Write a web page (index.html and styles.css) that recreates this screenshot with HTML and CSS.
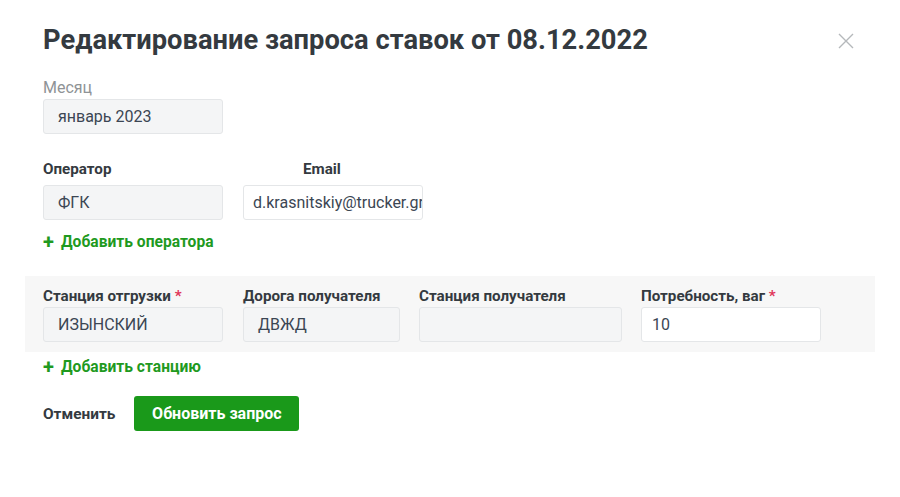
FILE: index.html
```html
<!DOCTYPE html>
<html lang="ru">
<head>
<meta charset="utf-8">
<link rel="stylesheet" href="styles.css">
</head>
<body>
<div class="modal">
  <div class="header">
    <h1 class="title">Редактирование запроса ставок от 08.12.2022</h1>
    <button class="close" aria-label="Закрыть">
      <svg width="16" height="16" viewBox="0 0 16 16"><path d="M1 1L15 15M15 1L1 15" stroke="#b5b8bb" stroke-width="1.4" fill="none"/></svg>
    </button>
  </div>

  <div class="section">
    <div class="label label-muted">Месяц</div>
    <div class="field field-gray">январь 2023</div>
  </div>

  <div class="section row-op">
    <div class="col">
      <div class="label label-bold">Оператор</div>
      <div class="field field-gray">ФГК</div>
    </div>
    <div class="col">
      <div class="label label-bold label-email">Email</div>
      <div class="field field-white field-email">d.krasnitskiy@trucker.group</div>
    </div>
  </div>

  <div class="section add add-op"><span class="plus">+</span>Добавить оператора</div>

  <div class="band">
    <div class="col w180">
      <div class="label label-bold">Станция отгрузки <span class="req">*</span></div>
      <div class="field field-gray">ИЗЫНСКИЙ</div>
    </div>
    <div class="col w157">
      <div class="label label-bold">Дорога получателя</div>
      <div class="field field-gray">ДВЖД</div>
    </div>
    <div class="col w203">
      <div class="label label-bold">Станция получателя</div>
      <div class="field field-gray"></div>
    </div>
    <div class="col w180">
      <div class="label label-bold">Потребность, ваг <span class="req">*</span></div>
      <div class="field field-white field-num">10</div>
    </div>
  </div>

  <div class="section add add-st"><span class="plus">+</span>Добавить станцию</div>

  <div class="section actions">
    <span class="cancel">Отменить</span>
    <button class="submit">Обновить запрос</button>
  </div>
</div>
</body>
</html>
```

FILE: styles.css
```css
* { box-sizing: border-box; }
html, body { margin: 0; padding: 0; background: #fff; }
body {
  font-family: Roboto, "Noto Sans", "Liberation Sans", sans-serif;
  color: #343a40;
  width: 900px;
  height: 497px;
  overflow: hidden;
}
.modal { padding: 25px 25px 0 25px; }
.header {
  display: flex;
  justify-content: space-between;
  align-items: center;
  padding-left: 18px;
  padding-right: 21px;
}
.title {
  margin: 0;
  font-size: 27.3px;
  line-height: 30px;
  font-weight: 700;
  color: #343a40;
}
.close {
  border: 0;
  background: none;
  padding: 0;
  width: 16px;
  height: 16px;
  margin-top: 2px;
}
.close svg { display: block; }
.section { padding-left: 18px; }
.label {
  font-size: 15.2px;
  line-height: 18px;
  white-space: nowrap;
}
.label-muted { font-size: 16px; color: #8f9396; margin-top: 24px; }
.label-bold { font-weight: 700; color: #343a40; }
.req { color: #e0365a; }
.field {
  height: 35px;
  border-radius: 3px;
  border: 1px solid #e4e6e8;
  font-size: 16px;
  line-height: 33px;
  color: #3b4653;
  white-space: nowrap;
  overflow: hidden;
}
.field-gray { background: #f4f5f6; padding-left: 14px; }
.field-white { background: #fff; padding-left: 9px; }
.section > .field { width: 180px; margin-top: 2px; }
.row-op { display: flex; gap: 20px; margin-top: 26px; }
.row-op .col { width: 180px; }
.row-op .field { margin-top: 7px; }
.label-email { padding-left: 60px; }
.field-email { padding-right: 0; text-overflow: clip; }
.add {
  font-size: 15.6px;
  line-height: 18px;
  font-weight: 700;
  color: #1f9a1f;
  display: flex;
  align-items: center;
}
.plus { font-size: 20px; font-weight: 700; width: 18px; }
.add-op { margin-top: 13px; }
.band {
  margin-top: 25px;
  background: #f7f7f7;
  padding: 11px 18px 10px 18px;
  display: flex;
  gap: 19px;
}
.band .field { margin-top: 2px; }
.w180 { width: 180px; }
.w157 { width: 157px; }
.w203 { width: 203px; }
.band .col:first-child { margin-right: 1px; }
.field-num { padding-left: 10px; }
.add-st { margin-top: 6px; }
.actions {
  margin-top: 20px;
  display: flex;
  align-items: center;
  gap: 19px;
}
.cancel {
  font-size: 15.4px;
  font-weight: 700;
  color: #343a40;
}
.submit {
  height: 35px;
  width: 165px;
  border: 0;
  border-radius: 3px;
  background: #1a991a;
  color: #fff;
  font-family: Roboto, "Noto Sans", sans-serif;
  font-size: 16px;
  font-weight: 700;
  padding: 0;
}
```
